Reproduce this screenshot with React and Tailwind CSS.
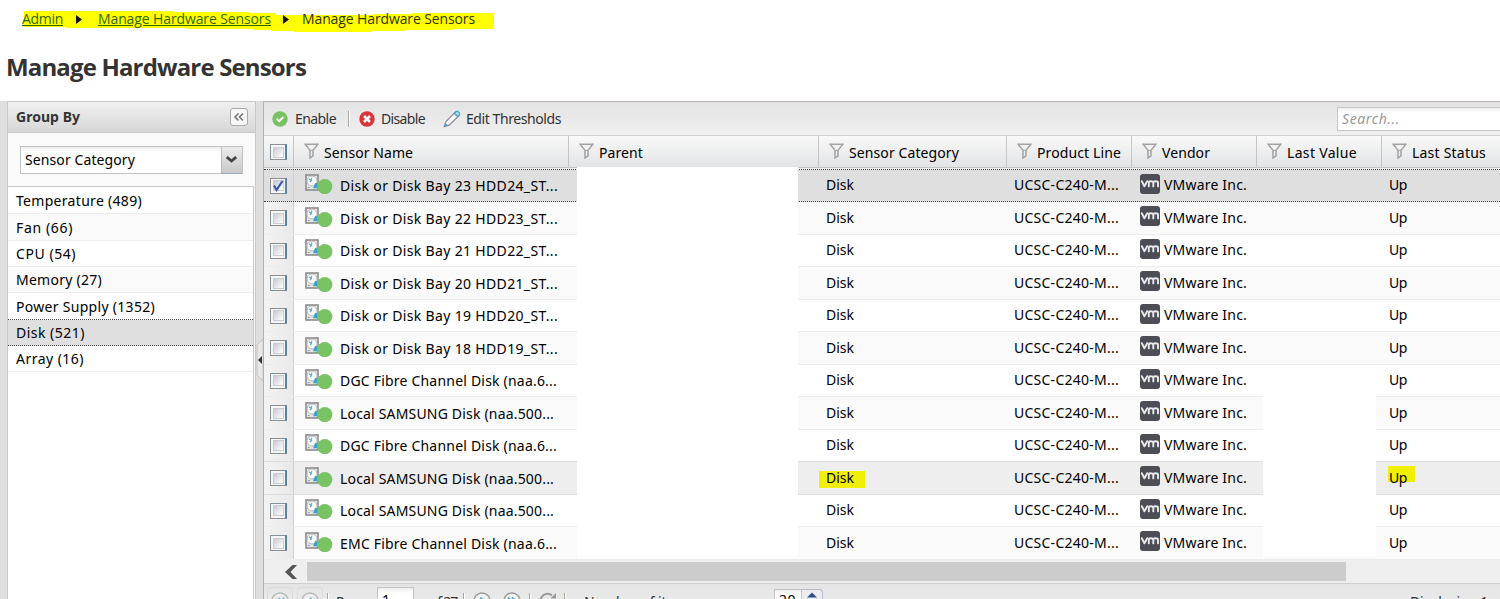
import React from 'react';

const groups = [
  { name: 'Temperature', count: 489, width: 126 },
  { name: 'Fan', count: 66, width: 57 },
  { name: 'CPU', count: 54, width: 60 },
  { name: 'Memory', count: 27, width: 86 },
  { name: 'Power Supply', count: 1352, width: 139 },
  { name: 'Disk', count: 521, width: 69, selected: true },
  { name: 'Array', count: 16, width: 68 },
];

const sensors = [
  { name: 'Disk or Disk Bay 23 HDD24_ST...', width: 218, checked: true },
  { name: 'Disk or Disk Bay 22 HDD23_ST...', width: 218 },
  { name: 'Disk or Disk Bay 21 HDD22_ST...', width: 218 },
  { name: 'Disk or Disk Bay 20 HDD21_ST...', width: 218 },
  { name: 'Disk or Disk Bay 19 HDD20_ST...', width: 218 },
  { name: 'Disk or Disk Bay 18 HDD19_ST...', width: 218 },
  { name: 'DGC Fibre Channel Disk (naa.6...', width: 217 },
  { name: 'Local SAMSUNG Disk (naa.500...', width: 214 },
  { name: 'DGC Fibre Channel Disk (naa.6...', width: 217 },
  { name: 'Local SAMSUNG Disk (naa.500...', width: 214, hovered: true },
  { name: 'Local SAMSUNG Disk (naa.500...', width: 214 },
  { name: 'EMC Fibre Channel Disk (naa.6...', width: 217 },
];

const columns = [
  { title: 'Sensor Name', width: 89 },
  { title: 'Parent', width: 44 },
  { title: 'Sensor Category', width: 110 },
  { title: 'Product Line', width: 84 },
  { title: 'Vendor', width: 48 },
  { title: 'Last Value', width: 70 },
  { title: 'Last Status', width: 74 },
];

const gridCols = 'grid grid-cols-[30px_275px_250px_188px_125px_125px_125px_119px]';

// Keeps a label at a fixed width by spreading the difference over its letters
function Label({ children, width, className = '' }) {
  const ref = React.useRef(null);
  React.useLayoutEffect(() => {
    const el = ref.current;
    el.style.letterSpacing = '0px';
    const natural = el.getBoundingClientRect().width;
    el.style.letterSpacing = `${(width - natural) / el.textContent.length}px`;
  }, [width, children]);
  return (
    <span ref={ref} className={`inline-block whitespace-pre ${className}`}>
      {children}
    </span>
  );
}

function Checkbox({ checked }) {
  return (
    <span className="mt-px flex h-4 w-[17px] items-center justify-center border border-[#8a8f94] border-r-2 border-r-[#5584a8] bg-[#f5f5f5]">
      <span className="flex h-[11px] w-[11px] items-center justify-center border border-[#c9cdd2] bg-linear-to-br from-[#c8ccd3] to-white">
        {checked && (
          <svg viewBox="0 0 12 12" className="h-3 w-3 shrink-0 overflow-visible">
            <path d="M2 5.5 4.6 10 10.5 1" fill="none" stroke="#3b57a5" strokeWidth="2.2" />
          </svg>
        )}
      </span>
    </span>
  );
}

function FilterIcon() {
  return (
    <svg viewBox="0 0 15 16" className="h-4 w-[15px] shrink-0" fill="none" stroke="#a3a3a3" strokeWidth="1.5">
      <path d="M1.2 1.2h12.6L9 7.4v5.4L6 15V7.4Z" />
      <path d="M5.8 7.4h3.4" strokeWidth="1" />
    </svg>
  );
}

function DiskIcon() {
  return (
    <svg viewBox="0 0 28 20" className="mb-0.5 h-5 w-7 shrink-0">
      <rect x="1" y="1" width="12" height="15" fill="#e6e6e6" stroke="#8c8c8c" strokeWidth="1.6" />
      <circle cx="7" cy="7" r="5" fill="#fff" stroke="#b8b8b8" />
      <path d="m4 4.8 2 1.4M7 3.6l-1 2.6M5 8l2-2" stroke="#55b0d4" strokeWidth="1.2" />
      <path d="M10.2 8.8 8 14.3h4.4V9.5Z" fill="#39a1cd" />
      <path d="M2.8 13.6h2" stroke="#999" />
      <circle cx="19.8" cy="12.6" r="7.6" fill="#79c365" />
    </svg>
  );
}

function VmwareLogo() {
  return (
    <span className="flex h-5 w-5 shrink-0 items-start justify-center rounded-[3px] bg-[#4c4d55]">
      <svg viewBox="0 0 20 20" className="h-5 w-5" fill="none" stroke="#e9e9ec" strokeWidth="1.9" strokeLinejoin="round" strokeLinecap="round">
        <path d="M1.8 7.2 4.4 12.3 7.2 7.2" />
        <path d="M8.8 12.4V8.8Q8.8 7.3 10.8 7.3T13.3 8.8V12.4M13.3 8.8Q13.3 7.3 15.6 7.3T18 8.8V12.4" />
      </svg>
    </span>
  );
}

function BreadcrumbArrow({ className }) {
  return (
    <svg viewBox="0 0 6 9" className={`mt-px h-[9px] w-[6px] ${className}`}>
      <path d="M0 0v9l6-4.5Z" fill="#111" />
    </svg>
  );
}

function Breadcrumbs() {
  return (
    <nav className="relative h-[38px] font-['Open_Sans',sans-serif] text-sm leading-5 text-[#333300]">
      <svg viewBox="0 0 500 38" className="absolute left-0 top-0 h-[38px] w-[500px]">
        <path d="M24 11H174V12H250V13H276V15H373V14H412V13H494V29H453V30H406V31H372V32H294V31H272V30H254V29H187V28H66V27H24Z" fill="#ffff00" />
      </svg>
      <div className="relative flex items-center pl-[22px] pt-[9px]">
        <a className="flex text-[#336600]"><Label width={41} className="underline">Admin</Label></a>
        <BreadcrumbArrow className="ml-[13px]" />
        <a className="ml-4 flex text-[#336600]"><Label width={173} className="underline">Manage Hardware Sensors</Label></a>
        <BreadcrumbArrow className="ml-[12px]" />
        <span className="ml-[13px] flex"><Label width={173}>Manage Hardware Sensors</Label></span>
      </div>
    </nav>
  );
}

function GroupPanel() {
  return (
    <aside className="flex w-[249px] shrink-0 flex-col border-x border-t border-[#c8c8c8] bg-[#fafafa]">
      <div className="flex h-[31px] shrink-0 items-center justify-between border-b border-[#c8c8c8] bg-linear-to-b from-[#f0f0f0] to-[#d7d7d7] pl-2 pr-[7px] font-['Noto_Sans',sans-serif] font-bold text-[#333]">
        <Label width={64}>Group By</Label>
        <span className="mb-px flex h-[18px] w-[18px] items-center justify-center rounded-[3px] border border-[#aaa] bg-[#f7f7f7]">
          <svg viewBox="0 0 12 10" className="h-[10px] w-3" fill="none" stroke="#777" strokeWidth="1.6">
            <path d="M5.5 1.5 2 5l3.5 3.5M10 1.5 6.500 5 10 8.500" />
          </svg>
        </span>
      </div>
      <div className="h-[53px] shrink-0 pl-3 pt-[13px]">
        <div className="flex h-7 w-[223px] border border-[#c2c2c2] bg-white">
          <div className="flex-1 bg-linear-to-b from-[#eee] to-white to-20% pl-1 leading-[26px]">
            <Label width={110}>Sensor Category</Label>
          </div>
          <div className="flex w-[21px] items-center justify-center border-l border-[#bbb] bg-linear-to-b from-[#ececec] to-[#c9c9c9] shadow-[0_1px_0_#9aa8c4]">
            <svg viewBox="0 0 11 7" className="mb-0.5 mr-0.5 h-[7px] w-[11px]" fill="none" stroke="#444" strokeWidth="2.8">
              <path d="M0.8 1 5.5 5 10.2 1" />
            </svg>
          </div>
        </div>
      </div>
      <ul className="mr-px flex-1 border-r border-t border-[#c8c8c8] bg-white pt-px">
        {groups.map((group, i) => (
          <li
            key={group.name}
            className={`flex h-[26.35px] items-center border-b pl-2 pt-px ${
              group.selected
                ? 'border-dotted border-[#444] bg-[#dfdfdf]'
                : groups[i + 1]?.selected
                  ? 'border-dotted border-[#444] bg-white'
                  : i % 2
                    ? 'border-[#ededed] bg-[#fafafa]'
                    : 'border-[#ededed] bg-white'
            }`}
          >
            <Label width={group.width}>{`${group.name} (${group.count})`}</Label>
          </li>
        ))}
      </ul>
    </aside>
  );
}

function Splitter() {
  return (
    <div className="relative w-[7px] shrink-0 bg-[#dfdfdf]">
      <svg viewBox="0 0 7 42" className="absolute left-0 top-[238px] h-[42px] w-[7px]">
        <path d="M7 0 1 6V36L7 42Z" fill="#e8e8e8" stroke="#c6c6c6" />
        <path d="M6 17v8L2 21Z" fill="#333" />
      </svg>
    </div>
  );
}

function Toolbar() {
  return (
    <div className="flex h-[35px] shrink-0 items-center border-b border-t border-[#d0d0d0] border-t-[#b8b0ac] bg-linear-to-b from-[#e3e3e3] to-[#f0f0f0] pl-2 text-[#333]">
      <svg viewBox="0 0 16 16" className="h-4 w-4">
        <circle cx="8" cy="8" r="7.7" fill="#77c163" />
        <path d="M4.6 7.8 7.2 10.2 11.4 6" fill="none" stroke="#fff" strokeWidth="2" />
      </svg>
      <Label width={41} className="ml-[7px]">Enable</Label>
      <span className="ml-3 h-4 w-0.5 border-l border-r border-[#aaa] border-r-white" />
      <svg viewBox="0 0 16 16" className="ml-[9px] h-4 w-4">
        <circle cx="8" cy="8" r="7.7" fill="#d9343a" />
        <path d="m5 5 6 6M11 5l-6 6" stroke="#fff" strokeWidth="2.6" />
      </svg>
      <Label width={44} className="ml-[6px]">Disable</Label>
      <svg viewBox="0 0 18 18" className="ml-[18px] h-[18px] w-[18px]" strokeWidth="1.2">
        <path d="M1.2 16.6 3 11.6 12.4 2.2 15.8 5.7 6.2 15.2Z" fill="#fafafa" stroke="#889" />
        <path d="M11.3 3.2 13.2 1.4Q14.2.8 15.2 1.7L16.4 3Q17.1 4 16.3 5L14.7 6.7Z" fill="#a9d9eb" stroke="#45a2c5" />
        <path d="M1.2 16.6 2.5 12.9 4.8 15.2Z" fill="#45a2c5" />
      </svg>
      <Label width={95} className="ml-[5px]">Edit Thresholds</Label>
      <div className="ml-auto h-6 w-[163px] border border-r-0 border-[#c6c6c6] bg-linear-to-b from-[#eee] to-white to-20% pl-1 italic leading-[22px] text-[#999]">
        <Label width={58}>Search...</Label>
      </div>
    </div>
  );
}

function HeaderRow() {
  return (
    <div className={`${gridCols} h-8 shrink-0 border-b border-[#c5c5c5] bg-linear-to-b from-[#f9f9f9] to-[#e3e4e6]`}>
      <div className="flex items-center border-r border-[#c5c5c5] pl-[6px]">
        <Checkbox />
      </div>
      {columns.map((col, i) => (
        <div key={col.title} className="flex items-center overflow-hidden border-r border-[#c5c5c5] pl-[10px]">
          <span className="mb-[2px] flex"><FilterIcon /></span>
          <Label width={col.width} className="ml-[5px] mt-[3px]">
            {col.title}
          </Label>
        </div>
      ))}
    </div>
  );
}

function SensorRow({ sensor, index }) {
  let look = index % 2 ? 'border-[#ededed] bg-[#fafafa]' : 'border-[#ededed] bg-white';
  if (sensors[index + 1]?.hovered) look = 'border-[#dcdcdc] bg-white';
  if (sensor.hovered) look = 'border-[#dcdcdc] bg-[#eeeeee]';
  if (sensor.checked) look = 'border-dotted border-[#444] bg-[#dfdfdf]';
  return (
    <div className={`${gridCols} h-[32.5px] items-center border-b ${look}`}>
      <div className={`flex h-full items-center border-r border-[#cfcfcf] pl-[6px] ${sensor.checked ? '' : 'bg-linear-to-r from-[#f3f3f3] to-[#e9e9eb]'}`}>
        <Checkbox checked={sensor.checked} />
      </div>
      <div className="flex items-center pl-[11px]">
        <DiskIcon />
        <Label width={sensor.width} className="ml-[7px] mt-0.5">{sensor.name}</Label>
      </div>
      <div />
      <div className="relative pl-[7px]">
        {sensor.hovered && <span className="absolute left-0 top-[3px] h-[17px] w-[46px] bg-[#f0f000]" />}
        <Label width={28} className="relative">Disk</Label>
      </div>
      <div className="pl-[7px]"><Label width={105}>UCSC-C240-M...</Label></div>
      <div className="flex items-center pl-2">
        <span className="mb-[3px]"><VmwareLogo /></span>
        <Label width={83} className="ml-1">VMware Inc.</Label>
      </div>
      <div />
      <div className="relative pl-[7px]">
        {sensor.hovered && <span className="absolute left-[6px] top-[-2px] h-4 w-[27px] bg-[#f0f000]" />}
        <Label width={18} className="relative">Up</Label>
      </div>
    </div>
  );
}

function PagerIcon({ children, className = '' }) {
  return (
    <svg viewBox="0 0 18 18" className={`h-[18px] w-[18px] shrink-0 ${className}`} fill="none">
      <circle cx="9" cy="9" r="8" stroke="#9b9b9b" strokeWidth="1.5" fill="#f1f1f1" />
      {children}
    </svg>
  );
}

function Divider({ className }) {
  return <span className={`mt-[9px] h-4 w-0.5 shrink-0 border-l border-r border-[#aaa49a] border-r-white ${className}`} />;
}

function Pager() {
  return (
    <div className="flex h-8 shrink-0 items-start overflow-hidden border-t border-[#cfcfcf] bg-linear-to-b from-[#e4e4e4] to-[#efefef] text-[#333]">
      <span className="ml-[3px] mt-[3px] flex h-7 w-[26px] justify-center rounded-sm border border-[#d4d4d4] pt-1 opacity-60">
        <PagerIcon><path d="M9 5.5 5.5 9 9 12.5M13 5.5 9.5 9l3.5 3.5" stroke="#36a0c8" strokeWidth="1.5" /></PagerIcon>
      </span>
      <span className="ml-1 mt-[3px] flex h-7 w-[26px] justify-center rounded-sm border border-[#d4d4d4] pt-1 opacity-60">
        <PagerIcon><path d="M10.5 5.5 7 9l3.5 3.5" stroke="#36a0c8" strokeWidth="1.5" /></PagerIcon>
      </span>
      <Divider className="ml-[4px]" />
      <Label width={33} className="ml-[7px] mt-2">Page</Label>
      <span className="ml-2 mt-[3px] h-7 w-[37px] shrink-0 border border-[#c2c2c2] bg-linear-to-b from-[#eee] to-white to-20% pl-1 pt-[2px] text-black">1</span>
      <Label width={27} className="ml-[16px] mt-2 shrink-0">of 27</Label>
      <Divider className="ml-[6px]" />
      <PagerIcon className="ml-2 mt-2"><path d="M7.5 5.5 11 9l-3.5 3.5" stroke="#36a0c8" strokeWidth="1.7" /></PagerIcon>
      <PagerIcon className="ml-3 mt-2"><path d="M5 5.5 8.5 9 5 12.5M9 5.5 12.5 9 9 12.5" stroke="#36a0c8" strokeWidth="1.7" /></PagerIcon>
      <Divider className="ml-2" />
      <svg viewBox="0 0 18 18" className="ml-2 mt-2 h-[18px] w-[18px] shrink-0" fill="none" stroke="#999" strokeWidth="2">
        <path d="M15.5 9A7 7 0 1 1 13 3.5" />
        <path d="M17 1v5.5h-5.5Z" fill="#999" stroke="none" />
      </svg>
      <Divider className="ml-[7px]" />
      <Label width={175} className="ml-[18px] mt-2">Number of items per page:</Label>
      <span className="ml-[15px] mt-[5px] h-7 w-7 shrink-0 border border-[#c2c2c2] bg-linear-to-b from-[#eee] to-white to-20% pl-1 text-black">
        <Label width={17}>20</Label>
      </span>
      <span className="mt-[5px] flex h-7 w-[21px] shrink-0 justify-center rounded-tr-sm border border-l-0 border-[#b4bac8] bg-[#ededed] pt-[2px]">
        <svg viewBox="0 0 10 6" className="h-[6px] w-[10px]"><path d="M0 5.5 5 .5l5 5Z" fill="#2f4f93" /></svg>
      </span>
      <span className="ml-auto mt-2 w-[90px] shrink-0 overflow-hidden">
        <Label width={148}>Displaying 1 - 20 of 521</Label>
      </span>
    </div>
  );
}

function SensorGrid() {
  return (
    <main className="flex w-[1237px] shrink-0 flex-col overflow-hidden border-l border-[#b8b0ac] bg-white">
      <Toolbar />
      <HeaderRow />
      <div className="relative h-[392px] shrink-0">
        <div className="h-[1.5px] border-b border-dotted border-[#444] bg-[#f0f0f0]" />
        {sensors.map((sensor, i) => (
          <SensorRow key={i} sensor={sensor} index={i} />
        ))}
        {/* blanked out cells in the Parent and Last Value columns */}
        <div className="absolute -top-px left-[313px] h-[391px] w-[221px] bg-white" />
        <div className="absolute left-[999px] top-[228px] h-[161px] w-[113px] bg-white" />
      </div>
      <div className="flex h-[23px] shrink-0 items-center bg-[#efefef]">
        <svg viewBox="0 0 12 14" className="ml-[21px] mr-[10px] h-[14px] w-3" fill="#555">
          <path d="M7.5 0H12L5.5 7 12 14H7.5L0 7Z" />
        </svg>
        <div className="h-[19px] w-[1039px] bg-[#cccccc]" />
      </div>
      <Pager />
    </main>
  );
}

export default function App() {
  return (
    <div className="flex h-[599px] w-[1500px] flex-col overflow-hidden bg-white font-['Noto_Sans',sans-serif] text-sm leading-5 text-black">
      <Breadcrumbs />
      <h1 className="h-[63px] pl-[6px] pt-[13px] font-['Open_Sans',sans-serif] text-2xl font-bold text-[#333]">
        <Label width={300}>Manage Hardware Sensors</Label>
      </h1>
      <div className="flex h-[498px] shrink-0 overflow-hidden bg-[#dfdfdf]">
        <div className="w-[7px] shrink-0" />
        <GroupPanel />
        <Splitter />
        <SensorGrid />
      </div>
    </div>
  );
}
